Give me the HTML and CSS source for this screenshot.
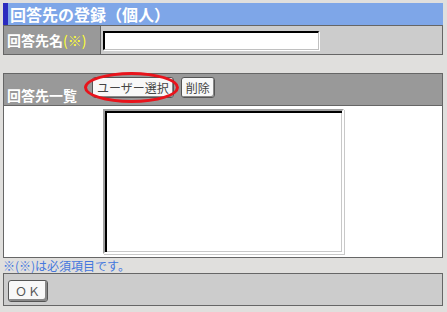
FILE: index.html
```html
<!DOCTYPE html>
<html lang="ja">
<head>
  <meta charset="UTF-8">
  <title>回答先の登録（個人）</title>
  <link rel="stylesheet" href="styles.css">
</head>
<body>

<div class="page">
  <div class="title">回答先の登録（個人）</div>

  <table class="form">
    <tr>
      <th class="label">回答先名<span class="req">(※)</span></th>
      <td class="value"><input type="text" class="text"></td>
    </tr>
  </table>

  <div class="list">
    <div class="listhead">
      <span class="label">回答先一覧</span>
      <button type="button" class="btn">ユーザー選択</button>
      <button type="button" class="btn">削除</button>
      <span class="mark"></span>
    </div>
    <div class="listbody">
      <div class="listbox"></div>
    </div>
  </div>

  <div class="note">※(※)は必須項目です。</div>

  <div class="footer">
    <button type="button" class="btn ok">ＯＫ</button>
  </div>
</div>

</body>
</html>
```

FILE: styles.css
```css
body {
  margin: 0;
  background: #e0dfdd;
  font-family: "Noto Sans CJK JP", "DejaVu Sans", sans-serif;
}
.page {
  width: 440px;
  padding: 3px 0 0 3px;
}
.title {
  height: 22px;
  line-height: 22px;
  background: #7ea6e8;
  border-left: 5px solid #2b2bbf;
  padding-left: 2px;
  color: white;
  font-size: 16px;
  font-weight: bold;
}
.form {
  width: 440px;
  border-collapse: collapse;
  border: 1px solid #666;
}
.form th, .form td {
  padding: 0;
  height: 28px;
}
.label {
  color: white;
  font-size: 14px;
  font-weight: bold;
  text-align: left;
}
.form .label {
  width: 93px;
  padding-left: 3px;
  background: #999;
  border-right: 1px solid #666;
}
.req {
  color: #ffff33;
  font-weight: normal;
}
.value {
  background: #ccc;
  padding-left: 2px;
}
.text {
  display: block;
  box-sizing: border-box;
  width: 216px;
  height: 19px;
  margin: 0 0 0 2px;
  padding: 0;
  border-style: solid;
  border-width: 2px 1px 1px 2px;
  border-color: #000 #c0c0c0 #c0c0c0 #000;
  box-shadow: 1px 1px 0 #fff;
  background: white;
}
.list {
  margin-top: 18px;
  border: 1px solid #666;
  box-sizing: border-box;
  width: 440px;
}
.listhead {
  position: relative;
  display: flex;
  align-items: flex-start;
  height: 32px;
  padding: 3px 0 0 3px;
  box-sizing: border-box;
  background: #999;
  border-bottom: 1px solid #666;
}
.listhead .label {
  margin-top: 10px;
  line-height: 16px;
  margin-right: 15px;
}
.btn {
  height: 21px;
  padding: 0 4px;
  margin-right: 7px;
  font-family: "Noto Sans CJK JP", sans-serif;
  font-size: 12px;
  line-height: 17px;
  color: #444;
  background: #f8f8f8;
  border: 1px solid #555;
  border-radius: 3px;
  box-shadow: inset -1px -1px 0 #888;
}
.mark {
  position: absolute;
  left: 80px;
  top: -2px;
  width: 89px;
  height: 25px;
  border: 3px solid #e8141c;
  border-radius: 50%;
  filter: blur(0.4px);
}
.listbody {
  height: 151px;
  background: white;
  display: flex;
  justify-content: center;
  align-items: flex-start;
  padding-top: 3px;
  box-sizing: border-box;
}
.listbox {
  box-sizing: border-box;
  width: 241px;
  height: 145px;
  border: 2px solid;
  border-color: #a0a0a0 #fff #fff #a0a0a0;
  box-shadow: 1px 1px 0 #c8c8c8, inset 2px 2px 0 #000, inset -1px -1px 0 #c8c8c8;
  background: white;
}
.note {
  height: 15px;
  line-height: 15px;
  font-size: 12px;
  color: #4477dd;
}
.footer {
  box-sizing: border-box;
  width: 440px;
  height: 33px;
  padding: 3px 4px;
  background: #ccc;
  border: 1px solid #666;
}
.ok {
  width: 40px;
  height: 22px;
  color: #555;
  letter-spacing: 1px;
  box-shadow: inset -2px -2px 0 #888;
}
```
